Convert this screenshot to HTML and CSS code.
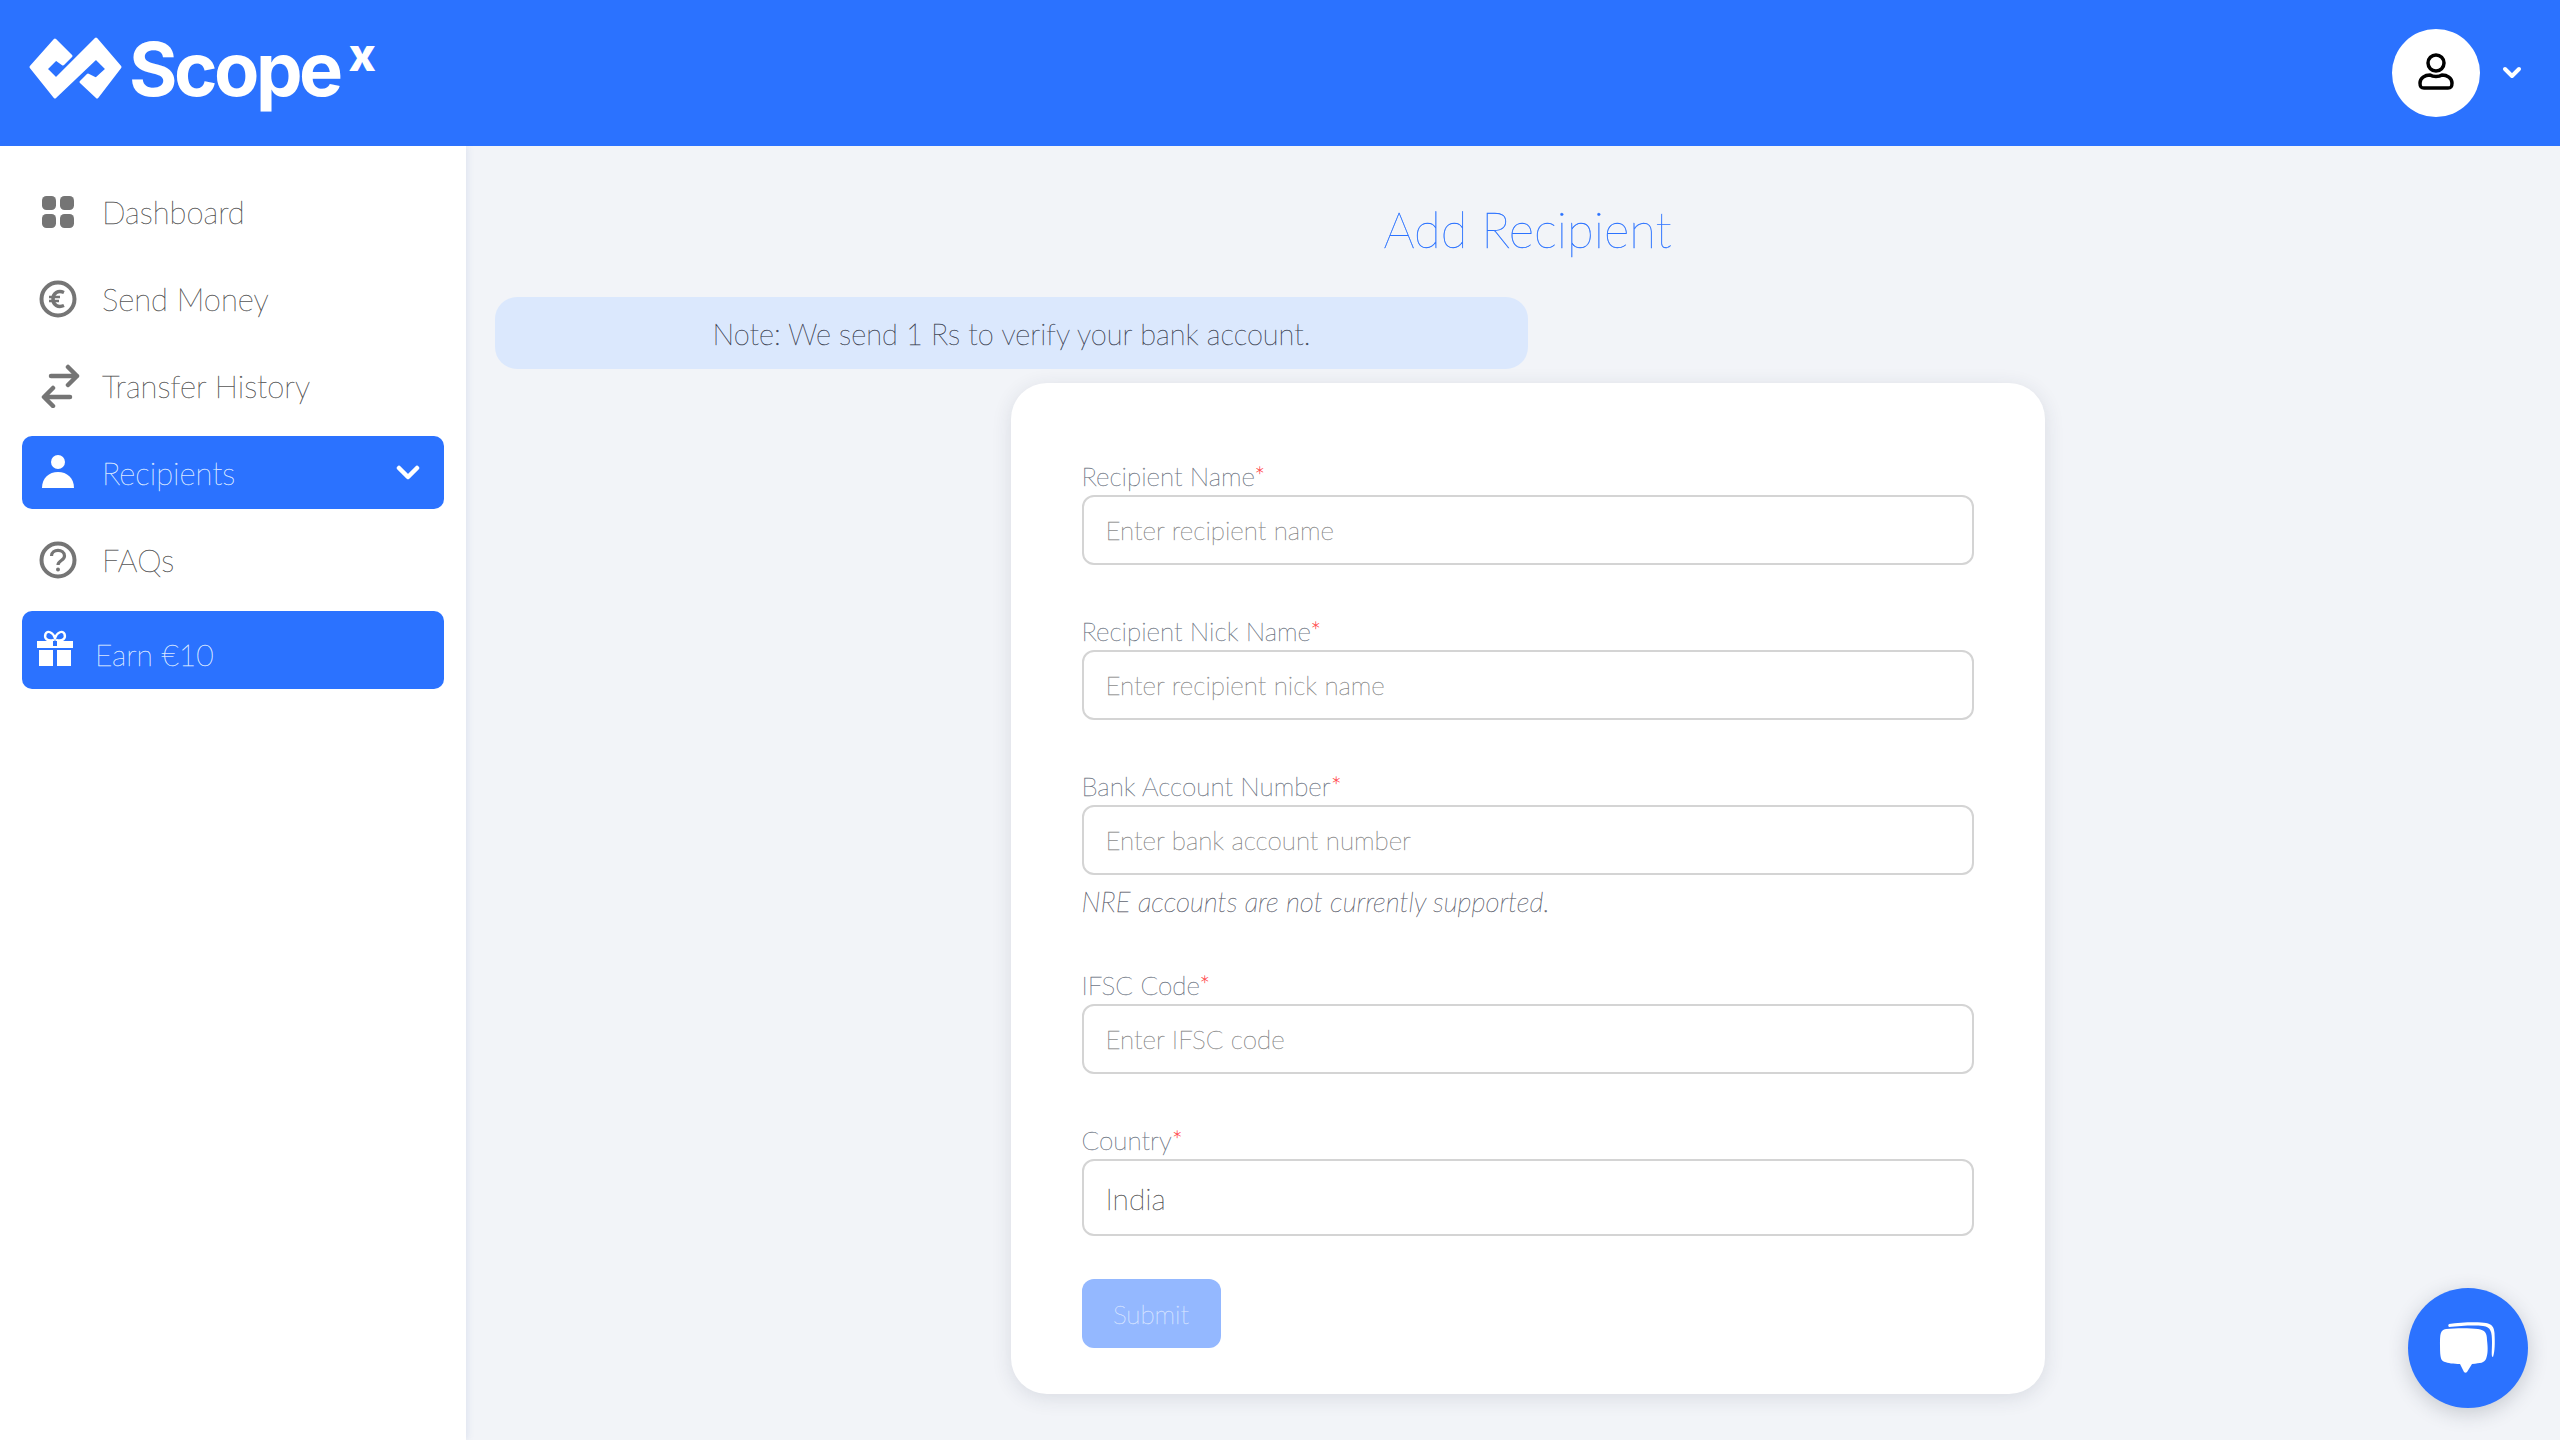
FILE: index.html
```html
<!DOCTYPE html>
<html lang="en">
<head>
    <meta charset="UTF-8">
    <meta name="viewport" content="width=device-width, initial-scale=1.0">
    <title>Add Recipient</title>
    <link rel="stylesheet" href="styles.css">
</head>
<body>

<header class="topbar">
    <a class="logo" href="#">
        <svg class="logo-mark" width="96" height="66" viewBox="28 36 96 66">
            <path d="M55 41 L71 57 L63 65 L56 60 L46 70 L56 80 L96 40 L120 68 L97 98 L81 83 L88 76 L96 80 L107 70 L96 59 L55 98 L31 68 Z" fill="#fff" stroke="#fff" stroke-width="3" stroke-linejoin="round"/>
        </svg>
        <span class="logo-name">Scope</span><span class="logo-x">x</span>
    </a>
    <div class="account">
        <div class="avatar">
            <svg width="40" height="40" viewBox="0 0 40 40" fill="none" stroke="#000" stroke-width="3.5">
                <circle cx="20" cy="10" r="8"/>
                <path d="M4 30 C4 25 9 22 14 22 C17 24 23 24 26 22 C31 22 36 25 36 30 C36 34 35 35 32 35 L8 35 C5 35 4 34 4 30 Z" stroke-linejoin="round"/>
            </svg>
        </div>
        <svg class="account-arrow" width="20" height="14" viewBox="0 0 20 14" fill="none" stroke="#fff" stroke-width="4" stroke-linecap="round" stroke-linejoin="round">
            <path d="M3 3 L10 10 L17 3"/>
        </svg>
    </div>
</header>

<div class="layout">
    <nav class="sidebar">
        <a class="menu-item" href="#">
            <svg class="menu-icon" width="44" height="44" viewBox="0 0 44 44" fill="#757575">
                <rect x="6" y="6" width="14" height="14" rx="4.5"/>
                <rect x="24" y="6" width="14" height="14" rx="4.5"/>
                <rect x="6" y="24" width="14" height="14" rx="4.5"/>
                <rect x="24" y="24" width="14" height="14" rx="4.5"/>
            </svg>
            <span>Dashboard</span>
        </a>
        <a class="menu-item" href="#">
            <svg class="menu-icon" width="44" height="44" viewBox="0 0 44 44" fill="none" stroke="#757575">
                <circle cx="22" cy="22" r="16.5" stroke-width="4"/>
                <path d="M28 15.5 C22 13 17 16 17 22 C17 28 22 31 28 28.5" stroke-width="3.5"/>
                <path d="M13 20 L24 20 M13 24 L23 24" stroke-width="2.5"/>
            </svg>
            <span>Send Money</span>
        </a>
        <a class="menu-item" href="#">
            <svg class="menu-icon" width="44" height="44" viewBox="0 0 44 44" fill="none" stroke="#757575" stroke-width="4.5" stroke-linecap="round" stroke-linejoin="round">
                <path d="M15 12 L41 12 M32 3 L41 12 L32 21"/>
                <path d="M34 33 L9 33 M17 24 L8 33 L17 42"/>
            </svg>
            <span>Transfer History</span>
        </a>
        <a class="menu-item menu-item-active" href="#">
            <svg class="menu-icon" width="44" height="44" viewBox="0 0 44 44" fill="#fff">
                <circle cx="22" cy="11" r="7"/>
                <path d="M6 37 C6 27 13 21 22 21 C31 21 38 27 38 37 Z"/>
            </svg>
            <span>Recipients</span>
            <svg class="menu-arrow" width="24" height="16" viewBox="0 0 24 16" fill="none" stroke="#fff" stroke-width="4.5" stroke-linecap="round" stroke-linejoin="round">
                <path d="M3 3 L12 12 L21 3"/>
            </svg>
        </a>
        <a class="menu-item" href="#">
            <svg class="menu-icon" width="44" height="44" viewBox="0 0 44 44" fill="none" stroke="#757575">
                <circle cx="22" cy="22" r="16.5" stroke-width="4"/>
                <path d="M15.5 18 C15.5 10.5 28.5 10.5 28.5 18 C28.5 22.5 22 22.5 22 27" stroke-width="3.2"/>
                <circle cx="22" cy="31.5" r="2" fill="#757575" stroke="none"/>
            </svg>
            <span>FAQs</span>
        </a>
        <a class="menu-item menu-item-earn" href="#">
            <svg class="gift-icon" width="38" height="38" viewBox="0 0 38 38">
                <path d="M18 11 C11 13 8 9 9.5 5 C11 1 17 3 19 9 C21 3 27 1 28.5 5 C30 9 27 13 20 11" fill="none" stroke="#fff" stroke-width="2.4"/>
                <path d="M1 12 H37 V19 H1 Z M3 21 H17 V37 H3 Z M21 21 H35 V37 H21 Z" fill="#fff"/>
                <rect x="17" y="12" width="4" height="5" fill="#2b72ff"/>
            </svg>
            <span>Earn €10</span>
        </a>
    </nav>

    <main class="content">
        <h1 class="page-title">Add Recipient</h1>
        <div class="note">Note: We send 1 Rs to verify your bank account.</div>

        <form class="card">
            <div class="field">
                <label for="nome">Recipient Name<em>*</em></label>
                <input type="text" id="nome" placeholder="Enter recipient name">
            </div>
            <div class="field">
                <label for="apelido">Recipient Nick Name<em>*</em></label>
                <input type="text" id="apelido" placeholder="Enter recipient nick name">
            </div>
            <div class="field field-hint">
                <label for="conta">Bank Account Number<em>*</em></label>
                <input type="text" id="conta" placeholder="Enter bank account number">
                <p class="hint">NRE accounts are not currently supported.</p>
            </div>
            <div class="field">
                <label for="ifsc">IFSC Code<em>*</em></label>
                <input type="text" id="ifsc" placeholder="Enter IFSC code">
            </div>
            <div class="field field-country">
                <label for="pais">Country<em>*</em></label>
                <input type="text" id="pais" value="India">
            </div>
            <button type="button" class="submit">Submit</button>
        </form>
    </main>
</div>

<button type="button" class="chat" aria-label="Chat">
    <svg class="chat-icon" width="70" height="70" viewBox="0 0 70 70" fill="#fff">
        <path d="M13 8 C25 6 45 6 50 7 C56 8 58 11 58.5 17 C59 27 59 35 57 41 C55 41 56 35 56 26 C56 16 55 11 47 10 C37 9 24 10 13 11 C12 10 12 9 13 8 Z"/>
        <path d="M10 13 C20 12 34 12 42 13 C49 14 51 17 51 24 C52 32 52 38 50 43 C48 47 45 47 36 48 L31 56 C30 57 29 57 28 56 L24 48 C18 48 11 47 9 46 C5 45 4 42 4 30 C4 18 4 14 10 13 Z"/>
    </svg>
</button>

</body>
</html>
```

FILE: styles.css
```css
* {
    box-sizing: border-box;
}

body {
    margin: 0;
    height: 1440px;
    overflow: hidden;
    background-color: #f2f4f8;
    font-family: "Lato", "Liberation Sans", sans-serif;
    font-weight: 100;
    -webkit-text-stroke: 0.35px currentColor;
    color: #5f6368;
}

a {
    text-decoration: none;
}

.topbar {
    height: 146px;
    background-color: #2b72ff;
    display: flex;
    align-items: center;
    justify-content: space-between;
    padding: 0 38px 0 28px;
}

.logo {
    display: flex;
    align-items: flex-start;
    height: 80px;
    margin-top: -8px;
    color: #fff;
    -webkit-text-stroke: 0;
}

.logo-mark {
    margin-top: 6px;
}

.logo-name {
    font-family: "Inter", "Liberation Sans", sans-serif;
    font-weight: 700;
    font-size: 74px;
    line-height: 80px;
    letter-spacing: -3.5px;
    margin-left: 5px;
}

.logo-x {
    font-family: "Inter", "Liberation Sans", sans-serif;
    font-weight: 800;
    font-size: 46px;
    line-height: 46px;
    margin: 2px 0 0 9px;
}

.account {
    display: flex;
    align-items: center;
    gap: 22px;
}

.avatar {
    width: 88px;
    height: 88px;
    border-radius: 50%;
    background-color: #fff;
    display: flex;
    align-items: center;
    justify-content: center;
}

.layout {
    display: flex;
    height: 1294px;
}

.sidebar {
    width: 466px;
    flex-shrink: 0;
    background-color: #fff;
    box-shadow: 2px 0 6px rgba(90, 120, 190, 0.12);
    padding: 29px 22px 0;
    display: flex;
    flex-direction: column;
    gap: 14px;
}

.menu-item {
    height: 73px;
    display: flex;
    align-items: center;
    gap: 22px;
    padding: 0 14px;
    border-radius: 10px;
    font-size: 31px;
    color: #555;
}

.menu-item-active {
    background-color: #2b72ff;
    color: #dbe7ff;
}

.menu-arrow {
    margin-left: auto;
    margin-right: 10px;
}

.menu-item-earn {
    height: 78px;
    margin-top: 1px;
    background-color: #2b72ff;
    color: #dbe7ff;
    padding-left: 14px;
    gap: 21px;
    font-size: 30px;
}

.gift-icon {
    margin-top: -4px;
}

.menu-item-earn span {
    padding-top: 8px;
}

.content {
    flex: 1;
    padding-left: 29px;
    display: flex;
    flex-direction: column;
}

.page-title {
    margin: 53px 0 0;
    height: 98px;
    text-align: center;
    font-size: 49px;
    line-height: 60px;
    font-weight: 100;
    color: #2b72ff;
}

.note {
    width: 1033px;
    height: 72px;
    border-radius: 22px;
    background-color: #dbe8fd;
    display: flex;
    align-items: center;
    justify-content: center;
    font-size: 29px;
    color: #3f4756;
}

.card {
    width: 1034px;
    height: 1011px;
    margin: 14px auto 0;
    padding: 78px 71px 0 71px;
    background-color: #fff;
    border-radius: 36px;
    box-shadow: 0 4px 20px rgba(40, 50, 70, 0.12);
}

.field {
    margin-bottom: 51px;
}

.field label {
    display: block;
    height: 34px;
    font-size: 26px;
    line-height: 30px;
    color: #6f7785;
}

.field label em {
    font-style: normal;
    color: #ff4d4f;
}

.field input {
    display: block;
    width: 100%;
    height: 70px;
    padding: 0 22px;
    border: 2px solid #d4d4d4;
    border-radius: 12px;
    background-color: #fff;
    font-family: inherit;
    font-weight: 100;
    font-size: 26px;
    color: #555;
    outline: none;
}

.field input::placeholder {
    color: #888;
    opacity: 1;
}

.field-hint {
    margin-bottom: 0;
    height: 199px;
}

.hint {
    margin: 12px 0 0;
    font-size: 27.5px;
    line-height: 30px;
    font-style: italic;
    color: #5f6470;
}

.field-country {
    margin-bottom: 43px;
}

.field-country input {
    height: 77px;
    font-size: 30px;
}

.submit {
    display: block;
    width: 139px;
    height: 69px;
    border: 0;
    border-radius: 12px;
    background-color: #94b8ff;
    color: #d6e3ff;
    font-family: inherit;
    font-weight: 100;
    font-size: 26px;
}

.chat {
    position: absolute;
    left: 2408px;
    top: 1288px;
    width: 120px;
    height: 120px;
    border: 0;
    padding: 0;
    border-radius: 50%;
    background-color: #2b72ff;
    box-shadow: 0 5px 20px rgba(40, 50, 70, 0.22);
    display: flex;
    align-items: center;
    justify-content: center;
}

.chat-icon {
    margin: 5px 0 0 6px;
}
```
